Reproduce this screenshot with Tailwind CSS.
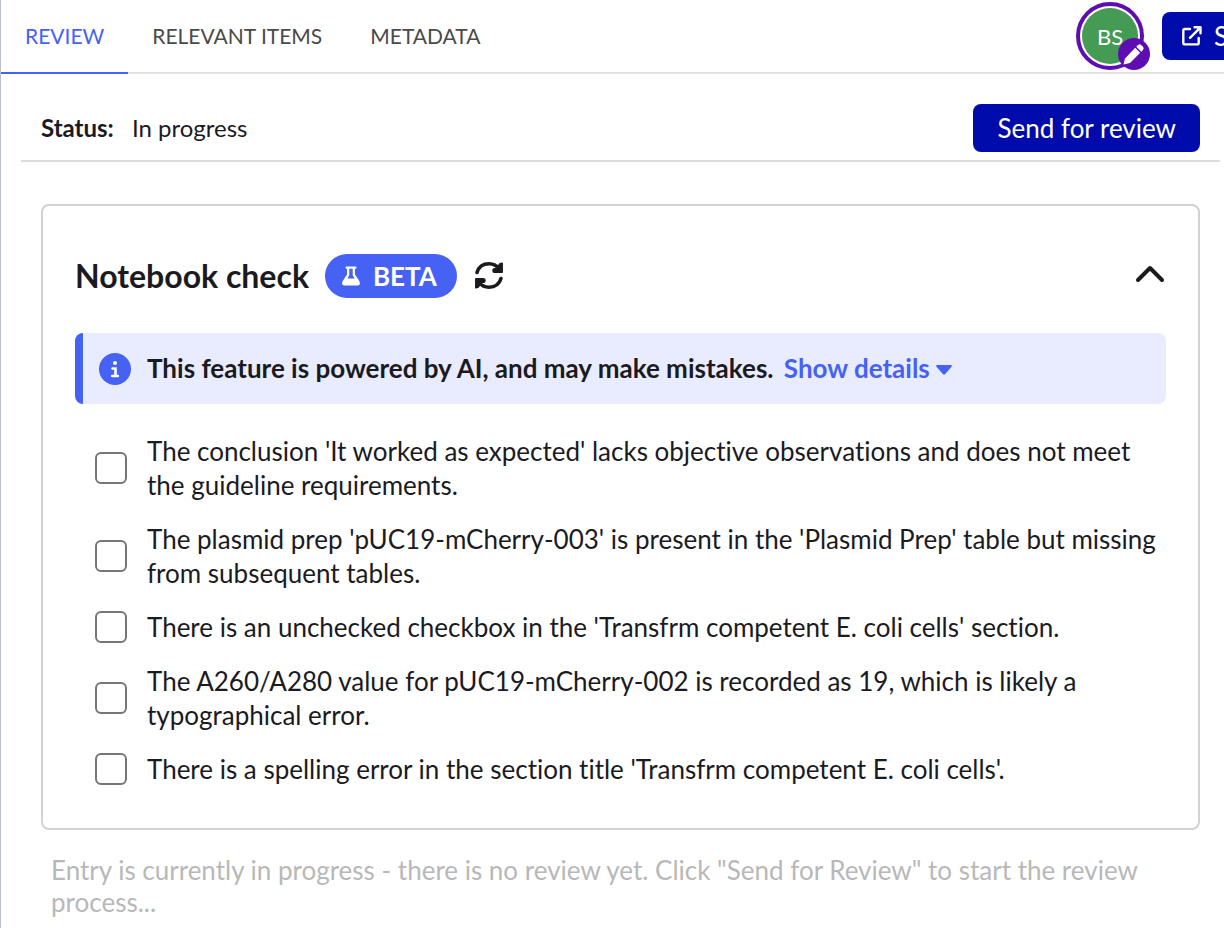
<!DOCTYPE html>
<html lang="en">
<head>
    <meta charset="UTF-8">
    <meta name="viewport" content="width=device-width, initial-scale=1.0">
    <script src="https://cdn.jsdelivr.net/npm/@tailwindcss/browser@4"></script>
    <title>Review</title>
</head>
<body class="bg-white text-[#1b1b1f] font-['Lato',sans-serif] [font-variant-ligatures:none] overflow-x-hidden">

    <div class="min-h-screen border-l border-[#b9bfc8]">
        <header class="flex justify-between border-b-2 border-[#e2e2e2]">
            <nav class="flex text-[21px] leading-7 text-[#4a4a4a]">
                <a href="#" class="-mb-[2px] px-6 py-[22px] border-b-2 border-[#4562f5] text-[#4562f5]">REVIEW</a>
                <a href="#" class="px-6 py-[22px]">RELEVANT ITEMS</a>
                <a href="#" class="px-6 py-[22px]">METADATA</a>
            </nav>
            <div class="flex items-center gap-[18px]">
                <div class="relative size-[68px] rounded-full border-4 border-[#5e0eb0] p-[2px]">
                    <div class="size-full rounded-full bg-[#459a54] text-white text-[22px] flex items-center justify-center">BS</div>
                    <div class="absolute -right-[10px] -bottom-1 size-8 rounded-full bg-[#5e0eb0]">
                        <svg class="size-8" viewBox="0 0 32 32" fill="#fff">
                            <path d="M5.500 26.500L7 20.500L17.200 9.800l5 5L12 25z"/>
                            <path d="M18.300 8.700l1.700-1.700q1.600-1.400 3.200 0l1.800 1.800q1.400 1.600 0 3.200l-1.700 1.700z"/>
                        </svg>
                    </div>
                </div>
                <button class="flex items-center gap-3 w-[62px] h-12 pl-5 rounded-l-lg bg-[#000bac] text-white text-[26px]">
                    <svg class="size-5 shrink-0" viewBox="0 0 20 20" fill="none" stroke="#fff" stroke-width="2.400" stroke-linecap="round" stroke-linejoin="round">
                        <path d="M8 3H3q-1.700 0-1.700 1.700v12q0 1.700 1.700 1.700h12q1.700 0 1.700-1.700V12"/>
                        <path d="M12.500 1.300h6v6M18 1.800L8 11.800"/>
                    </svg>
                    <span>S</span>
                </button>
            </div>
        </header>

        <main class="px-5">
            <div class="-mr-4 flex items-center justify-between border-b-2 border-[#dcdcdc] pl-5 pr-5 pt-[30px] pb-2">
                <p class="text-2xl"><b>Status:</b> <span class="ml-3">In progress</span></p>
                <button class="h-12 px-6 rounded-lg bg-[#000bac] text-white text-[26px]">Send for review</button>
            </div>

            <section class="mt-[42px] ml-5 mr-1 rounded-lg border-2 border-[#d2d2d2] px-8 pt-12 pb-[42px]">
                <div class="flex items-center gap-4">
                    <h2 class="text-[32px] leading-10 font-bold">Notebook check</h2>
                    <span class="flex items-center gap-3 h-11 pl-4 pr-5 rounded-full bg-[#4562f5] text-white text-[26px] font-bold">
                        <svg class="size-5" viewBox="0 0 20 20">
                            <path d="M5.500.5h9q1 0 1 1t-1 1.200H14V8.500l4.300 6.500q2 4.500-1.800 4.500h-13q-3.800 0-1.800-4.500L6 8.500V2.700h-.5q-1-.2-1-1.200t1-1z" fill="#fff"/>
                            <path d="M8.300 2.700h3.400v6.500l2 3.300H6.300l2-3.300z" fill="#4562f5"/>
                        </svg>
                        BETA
                    </span>
                    <button aria-label="Refresh">
                        <svg class="size-8" viewBox="0 0 32 32" fill="none" stroke="#1b1b1f" stroke-width="3.600" stroke-linecap="round" stroke-linejoin="round">
                            <path d="M4 12.500C6 6 11 3.800 16 3.800c5 0 8 2 10.500 5.500"/>
                            <path d="M28 18.500c-2 6.500-7 8.700-12 8.700-5 0-8-2-10.500-5.500"/>
                            <path d="M29.200 3.200v9H22q-2 0-2-1.800T22 8.700h3.500l-.5-2.500 2-2.500z" fill="#1b1b1f" stroke-width="1.500"/>
                            <path d="M2.800 27.800v-9H10q2 0 2 1.800t-2 1.700H6.500l.5 2.500-2 2.500z" fill="#1b1b1f" stroke-width="1.500"/>
                        </svg>
                    </button>
                    <button class="ml-auto" aria-label="Collapse">
                        <svg class="size-8" viewBox="0 0 32 32" fill="none" stroke="#1b1b1f" stroke-width="4" stroke-linecap="round" stroke-linejoin="round">
                            <path d="M4 20L16 8l12 12"/>
                        </svg>
                    </button>
                </div>

                <div class="mt-[35px] flex items-center gap-4 rounded-lg border-l-8 border-[#4562f5] bg-[#e9ecfe] px-4 py-[18px] text-[26px] leading-[35px] font-bold">
                    <svg class="size-8 shrink-0" viewBox="0 0 32 32">
                        <circle cx="16" cy="16" r="16" fill="#4562f5"/>
                        <circle cx="16" cy="10" r="2" fill="#fff"/>
                        <path d="M13.500 15.500h3V23M13.200 23h5.600" fill="none" stroke="#fff" stroke-width="2.600" stroke-linecap="round"/>
                    </svg>
                    <p>This feature is powered by AI, and may make mistakes.
                        <button class="ml-1 text-[#4562f5]">Show details
                            <svg class="inline w-4 h-3" viewBox="0 0 16 12" fill="#4562f5"><path d="M1 0h14q1.500.500.500 1.800L9.200 9q-1.200 1.200-2.400 0L.5 1.800Q-.5.500 1 0z"/></svg>
                        </button>
                    </p>
                </div>

                <ul class="mt-[30px] flex flex-col gap-5 pl-5 text-[26px] leading-[34px]">
                    <li><label class="flex items-center gap-5">
                        <input type="checkbox" class="appearance-none size-8 shrink-0 rounded-md border-2 border-[#767676]">
                        <span>The conclusion 'It worked as expected' lacks objective observations and does not meet the guideline requirements.</span>
                    </label></li>
                    <li><label class="flex items-center gap-5">
                        <input type="checkbox" class="appearance-none size-8 shrink-0 rounded-md border-2 border-[#767676]">
                        <span>The plasmid prep 'pUC19-mCherry-003' is present in the 'Plasmid Prep' table but missing from subsequent tables.</span>
                    </label></li>
                    <li><label class="flex items-center gap-5">
                        <input type="checkbox" class="appearance-none size-8 shrink-0 rounded-md border-2 border-[#767676]">
                        <span>There is an unchecked checkbox in the 'Transfrm competent E. coli cells' section.</span>
                    </label></li>
                    <li><label class="flex items-center gap-5">
                        <input type="checkbox" class="appearance-none size-8 shrink-0 rounded-md border-2 border-[#767676]">
                        <span>The A260/A280 value for pUC19-mCherry-002 is recorded as 19, which is likely a typographical error.</span>
                    </label></li>
                    <li><label class="flex items-center gap-5">
                        <input type="checkbox" class="appearance-none size-8 shrink-0 rounded-md border-2 border-[#767676]">
                        <span>There is a spelling error in the section title 'Transfrm competent E. coli cells'.</span>
                    </label></li>
                </ul>
            </section>

            <p class="mt-6 px-[30px] text-[26px] leading-8 text-[#b8b8b8]">Entry is currently in progress - there is no review yet. Click "Send for Review" to start the review process...</p>
        </main>
    </div>

</body>
</html>
